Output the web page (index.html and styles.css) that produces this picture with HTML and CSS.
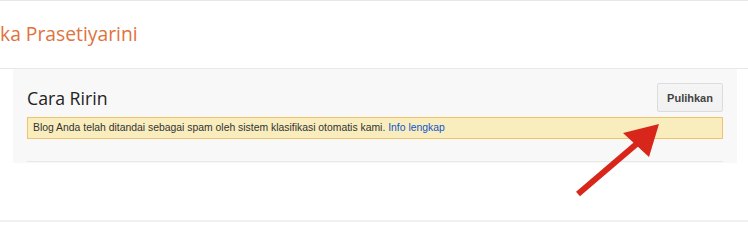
FILE: index.html
```html
<!DOCTYPE html>
<html>
<head>
<meta charset="utf-8">
<link rel="stylesheet" href="styles.css">
</head>
<body>
<div class="topbar">
  <h1 class="blog-name">ka Prasetiyarini</h1>
</div>
<div class="panel-wrap">
  <div class="panel">
    <div class="panel-head">
      <h2 class="panel-title">Cara Ririn</h2>
      <button class="btn">Pulihkan</button>
    </div>
    <div class="notice">Blog Anda telah ditandai sebagai spam oleh sistem klasifikasi otomatis kami. <a href="#" class="notice-link">Info lengkap</a></div>
  </div>
</div>
<div class="bottom-line"></div>
<svg class="arrow" width="748" height="241" viewBox="0 0 748 241">
  <line x1="578" y1="194" x2="640" y2="141" stroke="#d8261b" stroke-width="6"/>
  <polygon points="659,124 623,133 649,157" fill="#d8261b"/>
</svg>
</body>
</html>
```
FILE: styles.css
```css
html, body {
  margin: 0;
  padding: 0;
  background: #fff;
  width: 748px;
  height: 241px;
  overflow: hidden;
}
body {
  font-family: Arial, "Liberation Sans", sans-serif;
  position: relative;
}
.topbar {
  border-top: 1px solid #e8e8e8;
  border-bottom: 1px solid #e8e8e8;
  height: 67px;
  display: flex;
  align-items: center;
}
.blog-name {
  margin: 0;
  font-family: "Open Sans", sans-serif;
  font-weight: 400;
  font-size: 19.3px;
  color: #e0733d;
  line-height: 24px;
  padding-bottom: 2px;
}
.panel-wrap {
  padding-left: 13px;
}
.panel {
  width: 696px;
  padding: 14px 14px 1px;
  background: #f8f8f8;
}
.panel-head {
  display: flex;
  align-items: center;
  justify-content: space-between;
  height: 29px;
}
.panel-title {
  margin: 0;
  font-family: "Open Sans", sans-serif;
  font-weight: 400;
  font-size: 17.7px;
  color: #222;
  line-height: 24px;
}
.btn {
  height: 29px;
  width: 66px;
  padding: 0;
  border: 1px solid #dcdcdc;
  border-radius: 2px;
  background: linear-gradient(#f5f5f5, #f1f1f1);
  font-family: Arial, "Liberation Sans", sans-serif;
  font-weight: bold;
  font-size: 11px;
  color: #444;
}
.notice {
  margin-top: 5px;
  height: 20px;
  line-height: 20px;
  padding: 0 5px;
  background: #f9edbe;
  border: 1px solid #f0c36d;
  font-size: 10.4px;
  color: #333;
}
.notice-link {
  color: #1155cc;
  text-decoration: none;
}
.panel::after {
  content: "";
  display: block;
  margin-top: 22px;
  height: 1px;
  background: #e8e8e8;
}
.bottom-line {
  margin-top: 57px;
  height: 2px;
  background: #f0f0f0;
}
.arrow {
  position: absolute;
  left: 0;
  top: 0;
}
```
